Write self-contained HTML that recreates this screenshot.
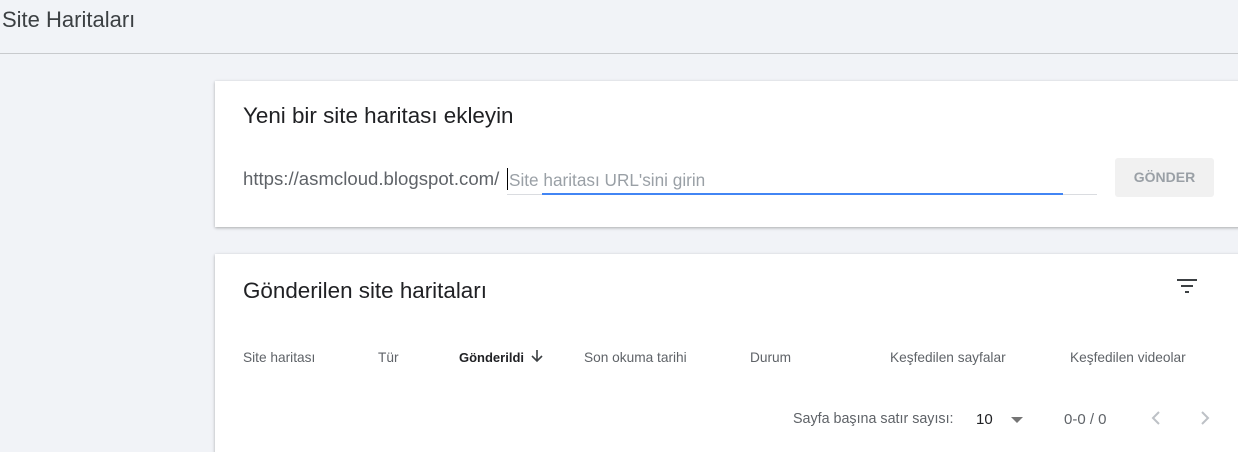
<!DOCTYPE html>
<html><head><meta charset="utf-8"><style>
html,body{margin:0;width:1238px;height:452px;overflow:hidden}
body{background:#f1f3f7;font-family:"Liberation Sans",sans-serif;position:relative}
.a{position:absolute;white-space:nowrap}
.card{position:absolute;left:215px;width:1040px;background:#fff;box-shadow:0 1px 3px rgba(0,0,0,.3)}
.th{position:absolute;top:350px;font-size:13.7px;color:#5f6368}
</style></head><body>
<div class="a" style="left:2px;top:7px;font-size:22px;color:#3c4043">Site Haritaları</div>
<div class="a" style="left:0;top:53px;width:1238px;height:1px;background:#c8cacd"></div>
<div class="card" style="top:81px;height:146px"></div>
<div class="a" style="left:243px;top:103px;font-size:22.4px;color:#202124">Yeni bir site haritası ekleyin</div>
<div class="a" style="left:243px;top:168px;font-size:18.6px;color:#5f6368">https://asmcloud.blogspot.com/</div>
<div class="a" style="left:507px;top:168px;width:1px;height:22px;background:#000"></div>
<div class="a" style="left:509px;top:170px;font-size:17.2px;color:#9aa0a6">Site haritası URL'sini girin</div>
<div class="a" style="left:507px;top:194px;width:590px;height:1px;background:#dadce0"></div>
<div class="a" style="left:542px;top:193px;width:521px;height:2px;background:#4285f4"></div>
<div class="a" style="left:1115px;top:158px;width:99px;height:39px;background:#f1f1f1;border-radius:3px;color:#9aa0a6;font-size:14px;font-weight:bold;text-align:center;line-height:39px">GÖNDER</div>
<div class="card" style="top:254px;height:220px"></div>
<div class="a" style="left:243px;top:278px;font-size:22.4px;color:#202124">Gönderilen site haritaları</div>
<svg class="a" style="left:1176px;top:277px" width="22" height="18"><path d="M1 3h20M5 9h12M9 15h4" stroke="#3c4043" stroke-width="2"/></svg>
<div class="th" style="left:243px">Site haritası</div>
<div class="th" style="left:378px">Tür</div>
<div class="th" style="left:459px;color:#202124;font-weight:bold;font-size:13px">Gönderildi</div>
<svg class="a" style="left:530px;top:349px" width="14" height="14"><path d="M7 1v11M2 7l5 5 5-5" stroke="#3c4043" stroke-width="1.6" fill="none"/></svg>
<div class="th" style="left:584px">Son okuma tarihi</div>
<div class="th" style="left:750px">Durum</div>
<div class="th" style="left:890px">Keşfedilen sayfalar</div>
<div class="th" style="left:1070px">Keşfedilen videolar</div>
<div class="a" style="left:793px;top:411px;font-size:14.3px;color:#5f6368">Sayfa başına satır sayısı:</div>
<div class="a" style="left:976px;top:411px;font-size:15px;color:#202124">10</div>
<svg class="a" style="left:1011px;top:416px" width="12" height="8"><path d="M0 1h12L6 7z" fill="#757575"/></svg>
<div class="a" style="left:1064px;top:411px;font-size:15px;color:#5f6368">0-0 / 0</div>
<svg class="a" style="left:1150px;top:410px" width="12" height="16"><path d="M9 2L3 8l6 6" stroke="#bdc1c6" stroke-width="2" fill="none"/></svg>
<svg class="a" style="left:1199px;top:410px" width="12" height="16"><path d="M3 2l6 6-6 6" stroke="#bdc1c6" stroke-width="2" fill="none"/></svg>
</body></html>
